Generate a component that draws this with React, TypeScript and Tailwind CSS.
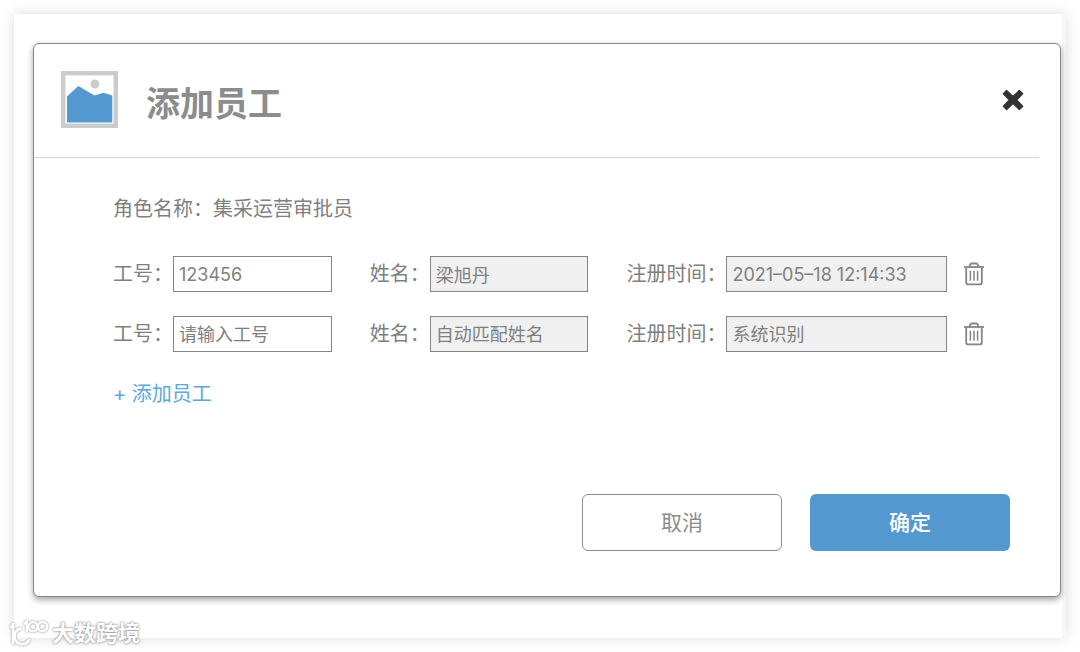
import { useState } from "react";

type Employee = {
  id: string;
  name: string;
  time: string;
};

const initialRows: Employee[] = [
  { id: "123456", name: "梁旭丹", time: "2021–05–18 12:14:33" },
  { id: "", name: "", time: "" },
];

const inputBase =
  "h-9 w-full min-w-0 border border-[#858585] px-[5px] text-[#7f7f7f] placeholder:text-[#7f7f7f] placeholder:opacity-100 outline-none";

function PictureIcon() {
  return (
    <svg width="57" height="57" viewBox="0 0 57 57" className="shrink-0" aria-hidden="true">
      <rect x="2.2" y="2.2" width="52.6" height="52.6" fill="#fff" stroke="#cbcbcb" strokeWidth="4.4" />
      <circle cx="34" cy="13" r="4.5" fill="#cbcbcb" />
      <path d="M6 25.5 17.3 15 33.5 24.6 42.5 21.8 51.3 24.6V51.5H6Z" fill="#5399d0" />
    </svg>
  );
}

function CloseIcon() {
  return (
    <svg width="22" height="22" viewBox="0 0 22 22" aria-hidden="true">
      <path
        d="M4.6 1.6 11 7.4 17.4 1.6 20.6 4.8 14.6 11 20.6 17.2 17.4 20.4 11 14.6 4.6 20.4 1.4 17.2 7.4 11 1.4 4.8Z"
        fill="#333"
        stroke="#333"
        strokeWidth="1.4"
        strokeLinejoin="round"
      />
    </svg>
  );
}

function TrashIcon() {
  return (
    <svg width="22" height="24" viewBox="0 0 22 24" fill="none" stroke="#858585" aria-hidden="true">
      <path d="M1 5H21" strokeWidth="1.8" />
      <path d="M6.3 5 7.2 2.7Q7.6 1.5 8.8 1.5H13.2Q14.4 1.5 14.8 2.7L15.7 5" strokeWidth="1.8" />
      <path d="M3.2 5.5V20.4Q3.2 22.4 5.2 22.4H16.8Q18.8 22.4 18.8 20.4V5.5" strokeWidth="1.8" />
      <path d="M7.4 8.8V18.8M11 8.8V18.8M14.6 8.8V18.8" strokeWidth="1.5" />
    </svg>
  );
}

function Watermark() {
  return (
    <div className="absolute bottom-1 left-2 flex items-center gap-[3px]">
      <svg width="41" height="30" viewBox="0 0 41 30" fill="none" className="drop-shadow-[0_0_1px_#888]" aria-hidden="true">
        <g stroke="#fff" strokeWidth="2.6">
          <path d="M2 9.5Q5.2 8.5 5.2 5V26.5" />
          <path d="M13.5 10.5A7.8 7.8 0 1 0 21.5 21" strokeWidth="3" />
          <path d="M15.5 6Q18.5 5.5 18.8 2V14" strokeWidth="2.4" />
          <circle cx="25" cy="8.7" r="4.6" strokeWidth="2.4" />
          <circle cx="34.6" cy="8.7" r="4.6" strokeWidth="2.4" />
        </g>
      </svg>
      <span className="text-[22px] leading-7 font-bold text-white [text-shadow:0_0_2px_#888,0_0_3px_#aaa]">
        大数跨境
      </span>
    </div>
  );
}

export default function App() {
  const [rows, setRows] = useState<Employee[]>(initialRows);

  const setId = (index: number, id: string) =>
    setRows(rows.map((row, i) => (i === index ? { ...row, id } : row)));
  const addRow = () => setRows([...rows, { id: "", name: "", time: "" }]);
  const removeRow = (index: number) => setRows(rows.filter((_, i) => i !== index));

  return (
    <div className="relative min-h-screen bg-white p-[14px] font-['Inter','Noto_Sans_CJK_SC',sans-serif] text-[#7f7f7f]">
      <main className="border-r-4 border-[#f7f7f7] bg-white pt-[29px] pr-px pb-[41px] pl-[19px] shadow-[0_0_14px_rgba(0,0,0,0.14)]">
        <section
          role="dialog"
          aria-labelledby="dialog-title"
          className="rounded-md border border-[#858585] bg-white shadow-[0_3px_6px_rgba(0,0,0,0.35)]"
        >
          <header className="mr-[21px] flex items-center border-b border-[#d4d4d4] pt-[27px] pb-[29px] pl-[27px]">
            <PictureIcon />
            <h1 id="dialog-title" className="ml-7 grow pt-2 text-[34px] leading-[49px] font-bold text-[#8c8c8c]">
              添加员工
            </h1>
            <button type="button" aria-label="关闭" className="mr-[15px]">
              <CloseIcon />
            </button>
          </header>

          <div className="pt-9 pr-[75px] pl-[79px] text-xl leading-[30px]">
            <p>角色名称：集采运营审批员</p>

            <div className="mt-8 flex flex-col gap-6">
              {rows.map((row, i) => (
                <div key={i} className="flex items-center gap-4">
                  <div className="grid grow grid-cols-[219fr_219fr_321fr] gap-[38px]">
                    <div className="flex items-center">
                      <label htmlFor={`id-${i}`} className="shrink-0">工号：</label>
                      <input
                        id={`id-${i}`}
                        value={row.id}
                        placeholder="请输入工号"
                        onChange={(e) => setId(i, e.target.value)}
                        className={`${inputBase} bg-white text-lg`}
                      />
                    </div>
                    <div className="flex items-center">
                      <label htmlFor={`name-${i}`} className="shrink-0">姓名：</label>
                      <input
                        id={`name-${i}`}
                        value={row.name}
                        placeholder="自动匹配姓名"
                        readOnly
                        className={`${inputBase} bg-[#f0f0f0] text-lg`}
                      />
                    </div>
                    <div className="flex items-center">
                      <label htmlFor={`time-${i}`} className="shrink-0">注册时间：</label>
                      <input
                        id={`time-${i}`}
                        value={row.time}
                        placeholder="系统识别"
                        readOnly
                        className={`${inputBase} bg-[#f0f0f0] text-lg`}
                      />
                    </div>
                  </div>
                  <button type="button" aria-label="删除" onClick={() => removeRow(i)} className="shrink-0">
                    <TrashIcon />
                  </button>
                </div>
              ))}
            </div>

            <button type="button" onClick={addRow} className="mt-[27px] block text-[#5ba9dc]">
              + 添加员工
            </button>
          </div>

          <footer className="mt-[85px] mr-[50px] mb-[45px] flex justify-end gap-7 text-[21px]">
            <button type="button" className="h-[57px] w-[200px] rounded-md border border-[#8c8c8c] text-[#8c8c8c]">
              取消
            </button>
            <button type="button" className="h-[57px] w-[200px] rounded-md bg-[#5399d0] font-medium text-white">
              确定
            </button>
          </footer>
        </section>
      </main>
      <Watermark />
    </div>
  );
}
